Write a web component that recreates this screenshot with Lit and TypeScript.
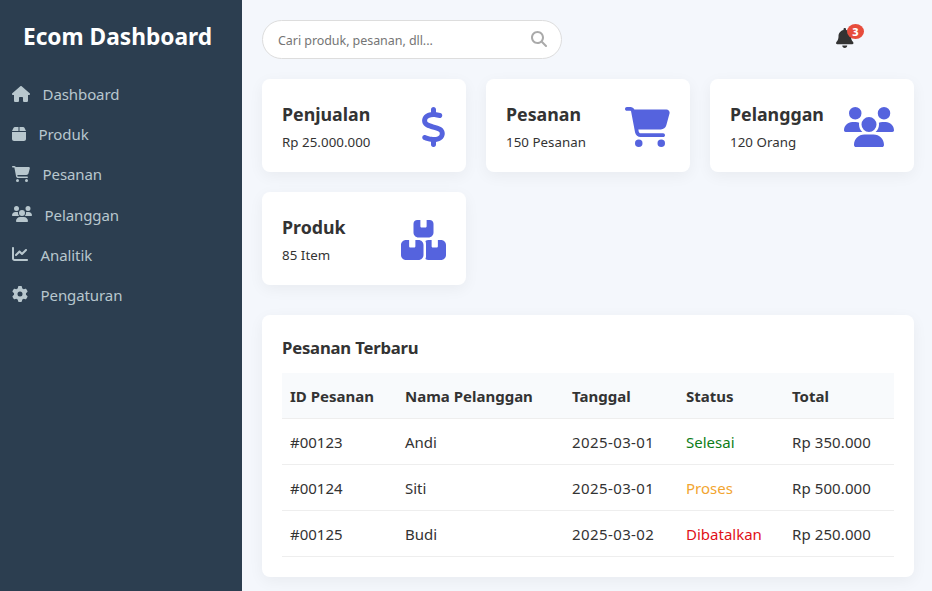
import { LitElement, html, css, svg } from "lit";
import { customElement, property } from "lit/decorators.js";

interface Glyph { w: number; d: string; }

const ICONS: Record<string, Glyph> = {
  house: { w: 576, d: "M575.8 255.5c0 18-15 32.1-32 32.1l-32 0 .7 160.2c0 2.7-.2 5.4-.5 8.1l0 16.2c0 22.1-17.9 40-40 40l-16 0c-1.1 0-2.2 0-3.3-.1c-1.4 .1-2.8 .1-4.2 .1L416 512l-24 0c-22.1 0-40-17.9-40-40l0-24 0-64c0-17.7-14.3-32-32-32l-64 0c-17.7 0-32 14.3-32 32l0 64 0 24c0 22.1-17.9 40-40 40l-24 0-31.9 0c-1.5 0-3-.1-4.5-.2c-1.2 .1-2.4 .2-3.6 .2l-16 0c-22.1 0-40-17.9-40-40l0-112c0-.9 0-1.9 .1-2.8l0-69.7-32 0c-18 0-32-14-32-32.1c0-9 3-17 10-24L266.4 8c7-7 15-8 22-8s15 2 21 7L564.8 231.5c8 7 12 15 11 24z" },
  box: { w: 448, d: "M50.7 58.5L0 160l208 0 0-128L93.7 32C75.5 32 58.9 42.3 50.7 58.5zM240 160l208 0L397.3 58.5C389.1 42.3 372.5 32 354.3 32L240 32l0 128zm208 32L0 192 0 416c0 35.3 28.7 64 64 64l320 0c35.3 0 64-28.7 64-64l0-224z" },
  cart: { w: 576, d: "M0 24C0 10.7 10.7 0 24 0L69.5 0c22 0 41.5 12.8 50.6 32l411 0c26.3 0 45.5 25 38.6 50.4l-41 152.3c-8.5 31.4-37 53.3-69.5 53.3l-288.5 0 5.4 28.5c2.2 11.3 12.1 19.5 23.6 19.5L488 336c13.3 0 24 10.7 24 24s-10.7 24-24 24l-288.3 0c-34.6 0-64.3-24.6-70.7-58.5L77.4 54.5c-.7-3.8-4-6.5-7.9-6.5L24 48C10.7 48 0 37.3 0 24zM128 464a48 48 0 1 1 96 0 48 48 0 1 1 -96 0zm336-48a48 48 0 1 1 0 96 48 48 0 1 1 0-96z" },
  users: { w: 640, d: "M144 0a80 80 0 1 1 0 160A80 80 0 1 1 144 0zM512 0a80 80 0 1 1 0 160A80 80 0 1 1 512 0zM0 298.7C0 239.8 47.8 192 106.7 192l42.7 0c15.9 0 31 3.5 44.6 9.7c-1.3 7.2-1.9 14.7-1.9 22.3c0 38.2 16.8 72.5 43.3 96c-.2 0-.4 0-.7 0L21.3 320C9.6 320 0 310.4 0 298.7zM405.3 320c-.2 0-.4 0-.7 0c26.6-23.5 43.3-57.8 43.3-96c0-7.6-.7-15-1.9-22.3c13.6-6.3 28.7-9.7 44.6-9.7l42.7 0C592.2 192 640 239.8 640 298.7c0 11.8-9.6 21.3-21.3 21.3l-213.3 0zM224 224a96 96 0 1 1 192 0 96 96 0 1 1 -192 0zM128 485.3C128 411.7 187.7 352 261.3 352l117.3 0C452.3 352 512 411.7 512 485.3c0 14.7-11.9 26.7-26.7 26.7l-330.7 0c-14.7 0-26.7-11.9-26.7-26.7z" },
  chart: { w: 512, d: "M64 64c0-17.7-14.3-32-32-32S0 46.3 0 64L0 400c0 44.2 35.8 80 80 80l400 0c17.7 0 32-14.3 32-32s-14.3-32-32-32L80 416c-8.8 0-16-7.2-16-16L64 64zm406.6 86.6c12.5-12.5 12.5-32.8 0-45.3s-32.8-12.5-45.3 0L320 210.7l-57.4-57.4c-12.5-12.5-32.8-12.5-45.3 0l-112 112c-12.5 12.5-12.5 32.8 0 45.3s32.8 12.5 45.3 0L240 221.3l57.4 57.4c12.5 12.5 32.8 12.5 45.3 0l128-128z" },
  gear: { w: 512, d: "M495.9 166.6c3.2 8.7 .5 18.4-6.4 24.6l-43.3 39.4c1.1 8.3 1.7 16.8 1.7 25.4s-.6 17.1-1.7 25.4l43.3 39.4c6.9 6.2 9.6 15.9 6.4 24.6c-4.4 11.9-9.7 23.3-15.8 34.3l-4.7 8.1c-6.6 11-14 21.4-22.1 31.2c-5.9 7.2-15.7 9.6-24.5 6.8l-55.7-17.7c-13.4 10.3-28.2 18.9-44 25.4l-12.5 57.1c-2 9.1-9 16.3-18.2 17.8c-13.8 2.3-28 3.5-42.5 3.5s-28.7-1.2-42.5-3.5c-9.2-1.5-16.2-8.7-18.2-17.8l-12.5-57.1c-15.8-6.5-30.6-15.1-44-25.4L83.1 425.9c-8.8 2.8-18.6 .3-24.5-6.8c-8.1-9.8-15.5-20.2-22.1-31.2l-4.7-8.1c-6.1-11-11.4-22.4-15.8-34.3c-3.2-8.7-.5-18.4 6.4-24.6l43.3-39.4C64.6 273.1 64 264.6 64 256s.6-17.1 1.7-25.4L22.4 191.2c-6.9-6.2-9.6-15.9-6.4-24.6c4.4-11.9 9.7-23.3 15.8-34.3l4.7-8.1c6.6-11 14-21.4 22.1-31.2c5.9-7.2 15.7-9.6 24.5-6.8l55.7 17.7c13.4-10.3 28.2-18.9 44-25.4l12.5-57.1c2-9.1 9-16.3 18.2-17.8C227.3 1.2 241.5 0 256 0s28.7 1.2 42.5 3.5c9.2 1.5 16.2 8.7 18.2 17.8l12.5 57.1c15.8 6.5 30.6 15.1 44 25.4l55.7-17.7c8.8-2.8 18.6-.3 24.5 6.8c8.1 9.8 15.5 20.2 22.1 31.2l4.7 8.1c6.1 11 11.4 22.4 15.8 34.3zM256 336a80 80 0 1 0 0-160 80 80 0 1 0 0 160z" },
  search: { w: 512, d: "M416 208c0 45.9-14.9 88.3-40 122.7L502.6 457.4c12.5 12.5 12.5 32.8 0 45.3s-32.8 12.5-45.3 0L330.7 376c-34.4 25.2-76.8 40-122.7 40C93.1 416 0 322.9 0 208S93.1 0 208 0S416 93.1 416 208zM208 352a144 144 0 1 0 0-288 144 144 0 1 0 0 288z" },
  bell: { w: 448, d: "M224 0c-17.7 0-32 14.3-32 32l0 19.2C119 66 64 130.6 64 208l0 18.8c0 47-17.3 92.4-48.5 127.6l-7.4 8.3c-8.4 9.4-10.4 22.9-5.3 34.4S19.4 416 32 416l384 0c12.6 0 24-7.4 29.2-18.9s3.1-25-5.3-34.4l-7.4-8.3C401.3 319.2 384 273.9 384 226.8l0-18.8c0-77.4-55-142-128-156.8L256 32c0-17.7-14.3-32-32-32zm45.3 493.3c12-12 18.7-28.3 18.7-45.3l-64 0-64 0c0 17 6.7 33.3 18.7 45.3s28.3 18.7 45.3 18.7s33.3-6.7 45.3-18.7z" },
  dollar: { w: 320, d: "M160 0c17.7 0 32 14.3 32 32l0 35.7c1.6 .2 3.1 .4 4.7 .7c.4 .1 .7 .1 1.1 .2l48 8.8c17.4 3.2 28.9 19.9 25.7 37.2s-19.9 28.9-37.2 25.7l-47.5-8.7c-31.3-4.6-58.9-1.5-78.3 6.2s-27.2 18.3-29 28.1c-2 10.7-.5 16.7 1.2 20.4c1.8 3.9 5.5 8.3 12.8 13.2c16.3 10.7 41.3 17.7 73.7 26.3l2.9 .8c28.6 7.6 63.6 16.8 89.6 33.8c14.2 9.3 27.6 21.9 35.9 39.5c8.5 17.9 10.3 37.9 6.4 59.2c-6.9 38-33.1 63.4-65.6 76.7c-13.7 5.6-28.6 9.2-44.4 11l0 33.4c0 17.7-14.3 32-32 32s-32-14.3-32-32l0-34.9c-.4-.1-.9-.1-1.3-.2l-.2 0s0 0 0 0c-24.4-3.8-64.5-14.3-91.5-26.3c-16.1-7.2-23.4-26.1-16.2-42.2s26.1-23.4 42.2-16.2c20.9 9.3 55.3 18.5 75.2 21.6c31.9 4.7 58.2 2 76-5.3c16.9-6.9 24.6-16.9 26.8-28.9c1.9-10.6 .4-16.7-1.3-20.4c-1.9-4-5.6-8.4-13-13.3c-16.4-10.7-41.5-17.7-74-26.3l-2.8-.7s0 0 0 0C119.4 279.3 84.4 270 58.4 253c-14.2-9.3-27.5-22-35.8-39.6c-8.4-17.9-10.1-37.9-6.1-59.2C23.7 116 52.3 91.2 84.8 78.3c13.3-5.3 27.9-8.9 43.2-11L128 32c0-17.7 14.3-32 32-32z" },
  boxes: { w: 576, d: "M248 0L208 0c-26.5 0-48 21.5-48 48l0 112c0 35.3 28.7 64 64 64l128 0c35.3 0 64-28.7 64-64l0-112c0-26.5-21.5-48-48-48L328 0l0 80c0 8.8-7.2 16-16 16l-48 0c-8.8 0-16-7.2-16-16l0-80zM64 256c-35.3 0-64 28.7-64 64L0 448c0 35.3 28.7 64 64 64l160 0c35.3 0 64-28.7 64-64l0-128c0-35.3-28.7-64-64-64l-40 0 0 80c0 8.8-7.2 16-16 16l-48 0c-8.8 0-16-7.2-16-16l0-80-40 0zM352 512l160 0c35.3 0 64-28.7 64-64l0-128c0-35.3-28.7-64-64-64l-40 0 0 80c0 8.8-7.2 16-16 16l-48 0c-8.8 0-16-7.2-16-16l0-80-40 0c-15 0-28.8 5.1-39.7 13.8c4.9 10.4 7.7 22 7.7 34.2l0 160c0 12.2-2.8 23.8-7.7 34.2C323.2 506.9 337 512 352 512z" },
};

@customElement("ui-icon")
export class UiIcon extends LitElement {
  @property() name = "house";
  @property({ type: Number }) size = 16;

  static styles = css`
    :host { display: inline-flex; flex: none; }
    svg { display: block; fill: currentColor; }
  `;

  render() {
    const g = ICONS[this.name];
    return html`<svg width=${(g.w / 512) * this.size} height=${this.size} viewBox="0 0 ${g.w} 512">${svg`<path d=${g.d}></path>`}</svg>`;
  }
}

const NAV = [
  ["house", "Dashboard"],
  ["box", "Produk"],
  ["cart", "Pesanan"],
  ["users", "Pelanggan"],
  ["chart", "Analitik"],
  ["gear", "Pengaturan"],
];

const CARDS = [
  ["Penjualan", "Rp 25.000.000", "dollar"],
  ["Pesanan", "150 Pesanan", "cart"],
  ["Pelanggan", "120 Orang", "users"],
  ["Produk", "85 Item", "boxes"],
];

const ORDERS = [
  ["#00123", "Andi", "2025-03-01", "Selesai", "Rp 350.000"],
  ["#00124", "Siti", "2025-03-01", "Proses", "Rp 500.000"],
  ["#00125", "Budi", "2025-03-02", "Dibatalkan", "Rp 250.000"],
];

@customElement("app-root")
export class AppRoot extends LitElement {
  static styles = css`
    :host {
      display: flex;
      height: 591px;
      overflow: hidden;
      background: #f4f7fc;
      color: #333;
      font: 15px/22px "Noto Sans", "Open Sans", sans-serif;
    }
    * { box-sizing: border-box; margin: 0; }
    .sidebar { width: 242px; flex: none; background: #2c3e50; padding: 21px 12px 20px; }
    .brand {
      color: #fff;
      font-size: 22.7px;
      line-height: 32px;
      font-weight: 700;
      text-align: center;
      padding-right: 7px;
      margin-bottom: 21px;
      white-space: nowrap;
    }
    .nav { display: flex; flex-direction: column; }
    .link { display: flex; align-items: center; gap: 12.6px; height: 40.2px; color: #b8c7ce; letter-spacing: -0.1px; }
    .link ui-icon { margin-bottom: 1.1px; }
    .main { flex: 1; padding: 20px 18px 0 20px; }
    .top { display: flex; justify-content: space-between; height: 39px; margin-bottom: 20px; }
    .search {
      width: 300px;
      display: flex;
      align-items: center;
      justify-content: space-between;
      padding: 0 14px 0 15px;
      background: #fff;
      border: 1px solid #ddd;
      border-radius: 20px;
      color: #757575;
      font-size: 12.5px;
      letter-spacing: -0.06px;
    }
    .search span { padding-top: 2px; }
    .search ui-icon { color: #aaa; margin-top: -2px; }
    .bell { position: relative; width: 18px; height: 20px; margin: 8px 60px 0 0; }
    .count {
      position: absolute;
      left: 11px;
      top: -4px;
      width: 17px;
      height: 15px;
      border-radius: 50%;
      background: #e74c3c;
      color: #fff;
      font-size: 11px;
      line-height: 16px;
      font-weight: 800;
      text-align: center;
    }
    .cards { display: grid; grid-template-columns: repeat(3, 204px); gap: 20px; margin-bottom: 30px; }
    .card, .panel { background: #fff; border-radius: 8px; box-shadow: 0 4px 15px rgba(0, 0, 0, 0.05); }
    .card { height: 93px; padding: 0 20px; display: flex; align-items: center; justify-content: space-between; }
    .card div { padding-top: 6px; }
    .card ui-icon { color: #5563de; margin-top: 3px; }
    .name { font-size: 17.8px; line-height: 27px; font-weight: 700; }
    .value { font-size: 13.3px; line-height: 28px; letter-spacing: 0.05px; }
    .panel { height: 262px; padding: 21px 20px 20px; }
    .title { font-size: 16.7px; line-height: 24px; font-weight: 700; letter-spacing: -0.2px; margin-bottom: 13px; }
    .row {
      display: grid;
      grid-template-columns: 115px 167px 114px 106px 110px;
      height: 46px;
      align-items: center;
      border-bottom: 1px solid #eee;
    }
    .row span { padding-left: 8px; white-space: nowrap; }
    .row .date { letter-spacing: 0.4px; }
    .row .total { letter-spacing: 0.1px; }
    .head { background: #f8fafc; font-weight: 700; }
    .selesai { color: #0c7d18; }
    .proses { color: #f2a530; }
    .dibatalkan { color: #df1018; }
  `;

  render() {
    const columns = ["id", "customer", "date", "status", "total"];
    return html`
      <aside class="sidebar">
        <h2 class="brand">Ecom Dashboard</h2>
        <nav class="nav">
          ${NAV.map(([i, t]) => html`<a class="link"><ui-icon name=${i}></ui-icon><span>${t}</span></a>`)}
        </nav>
      </aside>
      <main class="main">
        <header class="top">
          <div class="search"><span>Cari produk, pesanan, dll...</span><ui-icon name="search"></ui-icon></div>
          <div class="bell"><ui-icon name="bell" size="20"></ui-icon><span class="count">3</span></div>
        </header>
        <section class="cards">
          ${CARDS.map(([n, v, i]) => html`
            <div class="card">
              <div><h3 class="name">${n}</h3><p class="value">${v}</p></div>
              <ui-icon name=${i} size="40"></ui-icon>
            </div>`)}
        </section>
        <section class="panel">
          <h3 class="title">Pesanan Terbaru</h3>
          <div class="row head"><span>ID Pesanan</span><span>Nama Pelanggan</span><span>Tanggal</span><span>Status</span><span>Total</span></div>
          ${ORDERS.map((o) => html`
            <div class="row">${o.map((c, i) => html`<span class=${i === 3 ? c.toLowerCase() : columns[i]}>${c}</span>`)}</div>`)}
        </section>
      </main>
    `;
  }
}
